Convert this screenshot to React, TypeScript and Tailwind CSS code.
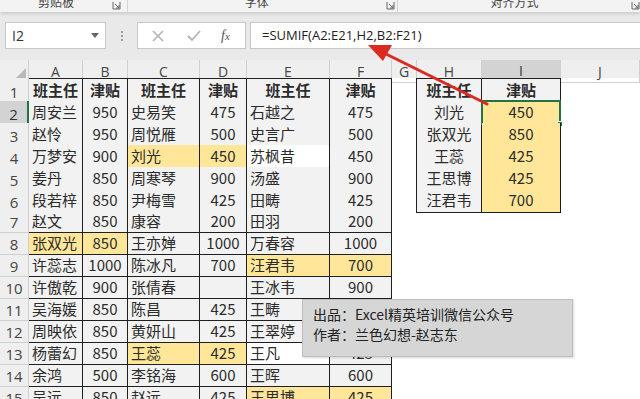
import React from 'react';

const FONT = '"Noto Sans CJK SC", "Noto Sans", sans-serif';

const DATA: string[][] = [
  ['班主任', '津贴', '班主任', '津贴', '班主任', '津贴'],
  ['周安兰', '950', '史易笑', '475', '石越之', '475'],
  ['赵怜', '950', '周悦雁', '500', '史言广', '500'],
  ['万梦安', '900', '刘光', '450', '苏枫昔', '450'],
  ['姜丹', '850', '周寒琴', '900', '汤盛', '900'],
  ['段若梓', '850', '尹梅雪', '425', '田畴', '425'],
  ['赵文', '850', '康容', '200', '田羽', '200'],
  ['张双光', '850', '王亦婵', '1000', '万春容', '1000'],
  ['许蕊志', '1000', '陈冰凡', '700', '汪君韦', '700'],
  ['许傲乾', '900', '张倩春', '', '王冰韦', '900'],
  ['吴海媛', '850', '陈昌', '425', '王畴', '425'],
  ['周映依', '850', '黄妍山', '425', '王翠婷', '425'],
  ['杨蕾幻', '850', '王蕊', '425', '王凡', '425'],
  ['余鸿', '500', '李铭海', '600', '王晖', '600'],
  ['吴远', '850', '赵远', '425', '王思博', '425'],
];

const LOOKUP: string[][] = [
  ['班主任', '津贴'],
  ['刘光', '450'],
  ['张双光', '850'],
  ['王蕊', '425'],
  ['王思博', '425'],
  ['汪君韦', '700'],
];

// row (1-based) -> first column of the highlighted name/amount pair
const HIGHLIGHT: Record<number, number> = { 4: 2, 8: 0, 9: 4, 13: 2, 15: 4 };
const WHITE_CELLS = ['4-4', '13-4'];

const LETTERS = ['A', 'B', 'C', 'D', 'E', 'F', 'G', 'H', 'I', 'J'];

const Launcher = () => (
  <svg width="9" height="9" viewBox="0 0 9 9" className="mt-[1px]">
    <path d="M1 1 L1 8 L8 8 L8 1" fill="none" stroke="#666" strokeWidth="1" />
    <path d="M3 3 L7 7 M7 4 L7 7 L4 7" fill="none" stroke="#666" strokeWidth="1" />
  </svg>
);

const Ribbon = () => (
  <div className="flex h-[12px] bg-[#f3f3f3] shadow-[0_2px_3px_rgba(0,0,0,0.12)] relative z-10 overflow-hidden text-[12px] text-[#444]">
    <div className="flex w-[128px] border-r border-[#d6d6d6]">
      <div className="w-[112px] flex justify-center -mt-[7px]">剪贴板</div>
      <Launcher />
    </div>
    <div className="flex w-[271px] border-r border-[#d6d6d6]">
      <div className="w-[258px] flex justify-center -mt-[7px]">字体</div>
      <Launcher />
    </div>
    <div className="flex flex-1">
      <div className="w-[233px] flex justify-center -mt-[7px]">对齐方式</div>
      <Launcher />
    </div>
  </div>
);

const FormulaBar = () => (
  <div className="h-[48px] bg-[#e9e9e9] pt-[10px]">
    <div className="flex h-[27px] items-stretch">
      <div className="ml-[5px] w-[101px] bg-white border border-[#c8c8c8] flex items-center justify-between px-[6px] text-[14px] text-[#333]" style={{ fontFamily: '"Open Sans", sans-serif' }}>
        <span>I2</span>
        <svg width="8" height="5" viewBox="0 0 8 5"><path d="M0 0 L8 0 L4 5 Z" fill="#666" /></svg>
      </div>
      <div className="w-[31px] flex flex-col items-center justify-center gap-[2px]">
        <div className="w-[2px] h-[2px] bg-[#9a9a9a]" />
        <div className="w-[2px] h-[2px] bg-[#9a9a9a]" />
        <div className="w-[2px] h-[2px] bg-[#9a9a9a]" />
      </div>
      <div className="w-[109px] bg-white border border-[#c8c8c8] flex items-center">
        <svg width="12" height="12" viewBox="0 0 12 12" className="ml-[14px]">
          <path d="M1 1 L11 11 M11 1 L1 11" stroke="#b3b3b3" strokeWidth="1.6" />
        </svg>
        <svg width="14" height="12" viewBox="0 0 14 12" className="ml-[23px]">
          <path d="M1 6 L5 10 L13 1" fill="none" stroke="#b3b3b3" strokeWidth="1.8" />
        </svg>
        <span className="ml-[20px] text-[14px] italic text-[#555]" style={{ fontFamily: '"Liberation Serif", serif' }}>
          f<span className="text-[11px]">x</span>
        </span>
      </div>
      <div className="ml-[4px] flex-1 bg-white border border-[#c8c8c8] border-r-0 flex items-center pl-[11px] text-[13px] text-[#222]" style={{ fontFamily: '"Open Sans", sans-serif' }}>
        =SUMIF(A2:E21,H2,B2:F21)
      </div>
    </div>
  </div>
);

const GRID = 'grid grid-cols-[29px_54px_45px_72px_47px_83px_62px_25px_65px_79px_1fr]';

const ColumnHeaders = () => (
  <div className={`${GRID} h-[18px] bg-[#efefef]`}>
    <div className="border-r border-b border-[#cfcfcf] flex items-end justify-end pr-[2px] pb-[1px]">
      <svg width="13" height="13" viewBox="0 0 13 13"><path d="M13 0 L13 13 L0 13 Z" fill="#b9b9b9" /></svg>
    </div>
    {LETTERS.map((l) => (
      <div
        key={l}
        className={
          l === 'I'
            ? 'bg-[#d3d3d3] border-r border-[#cfcfcf] border-b-2 border-b-[#217346] flex items-center justify-center text-[14px] text-[#333]'
            : 'border-r border-b border-[#cfcfcf] flex items-center justify-center text-[14px] text-[#444]'
        }
        style={{ fontFamily: '"Open Sans", sans-serif' }}
      >
        {l}
      </div>
    ))}
    <div className="border-b border-[#cfcfcf]" />
  </div>
);

const cellBg = (r: number, c: number) => {
  if (HIGHLIGHT[r] !== undefined && (c === HIGHLIGHT[r] || c === HIGHLIGHT[r] + 1)) return 'bg-[#ffe699]';
  if (WHITE_CELLS.includes(`${r}-${c}`)) return 'bg-white';
  return 'bg-[#f2f2f2]';
};

const Row = ({ r }: { r: number }) => {
  const row = DATA[r - 1];
  const head = r === 1;
  const h = head ? 'h-[23px]' : 'h-[22px]';
  const look = LOOKUP[r - 1];
  return (
    <div className={`${GRID} ${h}`}>
      <div
        className={
          r === 2
            ? 'bg-[#d3d3d3] border-r-2 border-r-[#217346] border-b border-b-[#cfcfcf] flex items-end justify-center text-[15px] text-[#333] leading-[20px]'
            : 'bg-[#efefef] border-r border-b border-[#cfcfcf] flex items-end justify-center text-[15px] text-[#444] leading-[20px]'
        }
        style={{ fontFamily: '"Open Sans", sans-serif' }}
      >
        {r}
      </div>
      {row.map((v, c) => {
        const isName = c % 2 === 0;
        return (
          <div
            key={c}
            className={`${cellBg(r, c)} border-r border-b border-[#1f1f1f] ${head ? 'border-t font-bold justify-center' : isName ? 'justify-start pl-[3px]' : 'justify-center'} flex items-center text-[15px] text-[#2b2b2b] whitespace-nowrap overflow-hidden`}
          >
            {v}
          </div>
        );
      })}
      <div className={r <= 6 ? 'border-r border-[#1f1f1f]' : ''} />
      {look ? (
        <>
          <div className={`bg-[#f2f2f2] border-r border-b border-[#1f1f1f] ${head ? 'border-t font-bold' : ''} flex items-center justify-center text-[15px] text-[#2b2b2b]`}>
            {look[0]}
          </div>
          <div className={`${head ? 'bg-[#f2f2f2] border-t font-bold' : 'bg-[#ffe699]'} border-r border-b border-[#1f1f1f] flex items-center justify-center text-[15px] text-[#2b2b2b] relative`}>
            {look[1]}
            {r === 2 && (
              <div className="absolute -left-[1px] -top-[1px] -right-[1px] -bottom-[1px] border-2 border-[#217346]">
                <div className="absolute -right-[4px] -bottom-[4px] w-[6px] h-[6px] bg-[#217346] border border-white" />
              </div>
            )}
          </div>
        </>
      ) : (
        <>
          <div />
          <div />
        </>
      )}
      <div />
    </div>
  );
};

export default function App() {
  return (
    <div className="relative w-[640px] h-[399px] overflow-hidden bg-white" style={{ fontFamily: FONT }}>
      <Ribbon />
      <FormulaBar />
      <ColumnHeaders />
      {DATA.map((_, i) => (
        <Row key={i} r={i + 1} />
      ))}

      {/* note box */}
      <div className="absolute left-[302px] top-[299px] w-[271px] h-[58px] bg-[#d6d6d6] border border-[#bdbdbd] shadow-[1px_1px_2px_rgba(0,0,0,0.15)] pl-[10px] pt-[4px] text-[14px] text-[#222] leading-[20px]">
        <div>出品：Excel精英培训微信公众号</div>
        <div>作者：兰色幻想-赵志东</div>
      </div>

      {/* red arrow */}
      <svg className="absolute left-0 top-0 pointer-events-none" width="640" height="399">
        <line x1="487" y1="104" x2="384" y2="53" stroke="#dc2a1f" strokeWidth="3" strokeLinecap="round" />
        <polygon points="368,45 392,45 383,61" fill="#dc2a1f" />
      </svg>
    </div>
  );
}
